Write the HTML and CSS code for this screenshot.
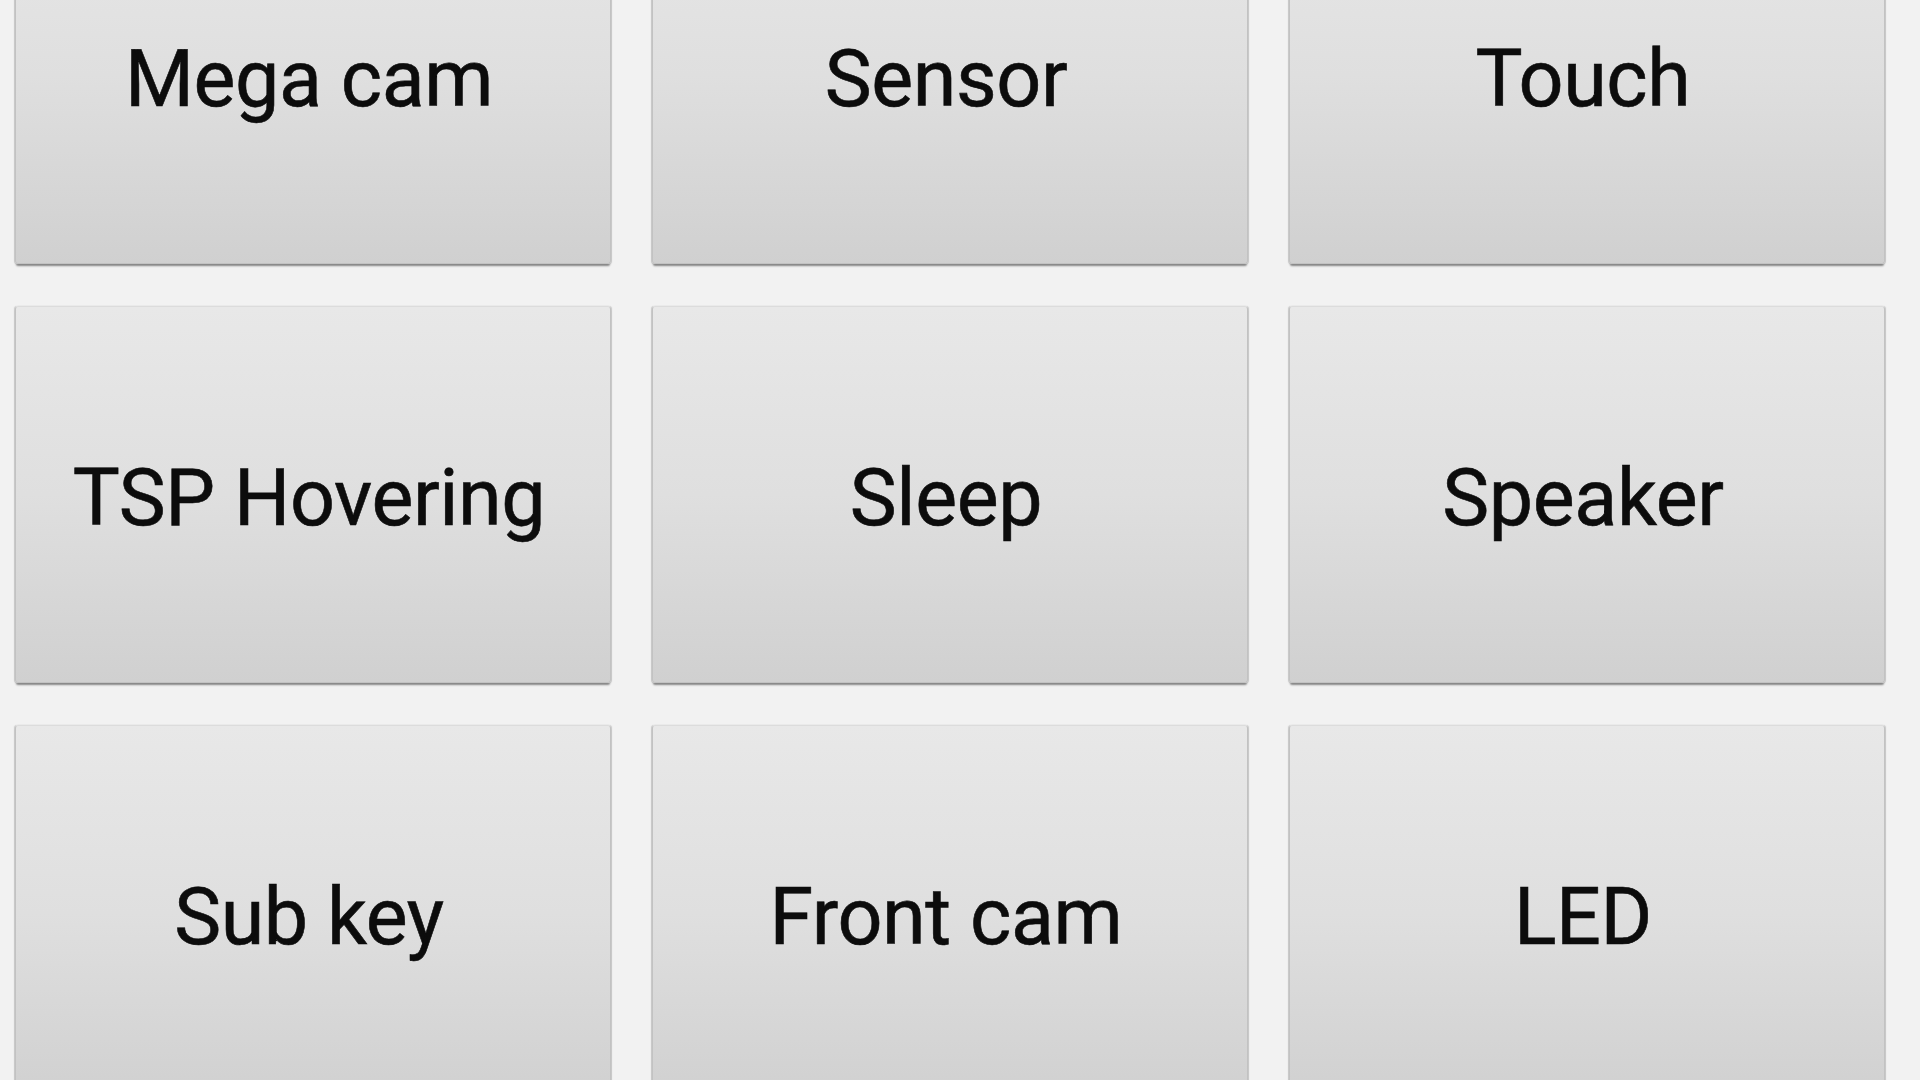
FILE: index.html
```html
<!DOCTYPE html>
<html lang="en">
<head>
<meta charset="utf-8">
<title>Test menu</title>
<link rel="stylesheet" href="styles.css">
</head>
<body>
<main class="menu">
  <div class="key"><span>Mega cam</span></div>
  <div class="key"><span>Sensor</span></div>
  <div class="key"><span>Touch</span></div>
  <div class="key"><span>TSP Hovering</span></div>
  <div class="key"><span>Sleep</span></div>
  <div class="key"><span>Speaker</span></div>
  <div class="key"><span>Sub key</span></div>
  <div class="key"><span>Front cam</span></div>
  <div class="key"><span>LED</span></div>
</main>
</body>
</html>
```
FILE: styles.css
```css
html, body {
  margin: 0;
  padding: 0;
  height: 100%;
  overflow: hidden;
  background: #f2f2f2;
}

.menu {
  display: grid;
  grid-template-columns: 596px 596px 596px;
  grid-auto-rows: 377px;
  column-gap: 41px;
  row-gap: 42px;
  padding-left: 15px;
  margin-top: -113px;
}

.key {
  display: flex;
  align-items: center;
  justify-content: center;
  padding-top: 7px;
  padding-right: 8px;
  box-sizing: border-box;
  border-radius: 3px;
  border: 1px solid #c2c2c2;
  border-top-color: #dcdcdc;
  background: linear-gradient(to bottom, #e8e8e8 0%, #dfdfdf 50%, #d0d0d0 100%);
  box-shadow: 0 3px 2px -1px #858585, 1px 0 1px #c9c9c9, -1px 0 1px #c9c9c9;
  font-family: Roboto, "Liberation Sans", sans-serif;
  font-size: 79px;
  color: #0c0c0c;
  letter-spacing: -0.4px;
  -webkit-text-stroke: 0.6px #0c0c0c;
}

.key span {
  white-space: nowrap;
}
```
